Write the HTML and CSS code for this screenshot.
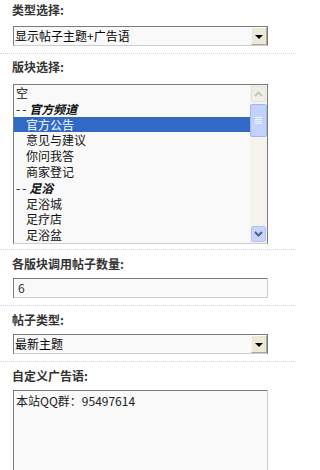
FILE: index.html
```html
<!DOCTYPE html>
<html lang="zh-CN">
<head>
<meta charset="utf-8">
<title>模块设置</title>
<link rel="stylesheet" href="styles.css">
</head>
<body>
<div class="form">
  <div class="sec sec-first">
    <div class="label">类型选择:</div>
    <div class="select">
      <span class="select-text">显示帖子主题+广告语</span>
      <span class="select-btn"><span class="arrow"></span></span>
    </div>
  </div>

  <div class="sec sec-list">
    <div class="label">版块选择:</div>
    <div class="listbox">
      <div class="options">
        <div class="opt">空</div>
        <div class="opt"><span class="dash">--</span><b class="grp">官方频道</b></div>
        <div class="opt sub selected">官方公告</div>
        <div class="opt sub">意见与建议</div>
        <div class="opt sub">你问我答</div>
        <div class="opt sub">商家登记</div>
        <div class="opt"><span class="dash">--</span><b class="grp">足浴</b></div>
        <div class="opt sub">足浴城</div>
        <div class="opt sub">足疗店</div>
        <div class="opt sub">足浴盆</div>
      </div>
      <div class="scrollbar">
        <div class="sb-btn sb-up">
          <svg width="9" height="6" viewBox="0 0 9 6"><path d="M1 5 L4.5 1.5 L8 5" fill="none" stroke="#c8c6bd" stroke-width="2"/></svg>
        </div>
        <div class="sb-track">
          <div class="sb-thumb">
            <svg width="7" height="7" viewBox="0 0 7 7"><path d="M0 .5H7M0 2.5H7M0 4.5H7M0 6.5H7" stroke="#eef3fe" stroke-width="1"/></svg>
          </div>
        </div>
        <div class="sb-btn sb-down">
          <svg width="9" height="6" viewBox="0 0 9 6"><path d="M1 1 L4.5 4.5 L8 1" fill="none" stroke="#4d6185" stroke-width="2"/></svg>
        </div>
      </div>
    </div>
  </div>

  <div class="sec">
    <div class="label">各版块调用帖子数量:</div>
    <div class="input">6</div>
  </div>

  <div class="sec">
    <div class="label">帖子类型:</div>
    <div class="select">
      <span class="select-text">最新主题</span>
      <span class="select-btn"><span class="arrow"></span></span>
    </div>
  </div>

  <div class="sec sec-last">
    <div class="label">自定义广告语:</div>
    <div class="textarea">本站QQ群：95497614</div>
  </div>
</div>
</body>
</html>
```

FILE: styles.css
```css
html, body {
  margin: 0;
  padding: 0;
  background: #ffffff;
}

body {
  font-family: "Noto Sans CJK SC", "DejaVu Sans", sans-serif;
  font-size: 12px;
  color: #000;
  overflow: hidden;
}

.form {
  width: 296px;
}

.sec {
  padding: 4px 0 7px 12px;
  border-bottom: 1px dotted #cfd6de;
}

.sec-first {
  padding-top: 0;
}

.sec-list {
  padding-top: 3px;
  padding-bottom: 5px;
}

.sec-last {
  border-bottom: none;
}

.label {
  font-weight: bold;
  line-height: 20px;
  height: 20px;
  color: #333;
  margin-bottom: 4px;
}

.sec-first .label {
  margin-bottom: 6px;
}

.sec-list .label {
  margin-bottom: 7px;
}

.select,
.input,
.textarea,
.listbox {
  margin-left: 1px;
  width: 255px;
  box-sizing: border-box;
  background: #f9f9f9;
  border-style: solid;
  border-width: 1px;
  border-color: #7b7b7b #cdcdcd #cdcdcd #7b7b7b;
}

.select {
  height: 20px;
  display: flex;
  align-items: stretch;
  border-right-color: #7b7b7b;
}

.select-text {
  flex: 1;
  line-height: 18px;
  padding-left: 1px;
  white-space: nowrap;
}

.select-btn {
  width: 16px;
  background: #ece9d8;
  border-style: solid;
  border-width: 1px;
  border-color: #ffffff #aca899 #aca899 #f5f4ee;
  box-sizing: border-box;
  display: flex;
  align-items: center;
  justify-content: center;
}

.arrow {
  width: 0;
  height: 0;
  border-left: 4px solid transparent;
  border-right: 4px solid transparent;
  border-top: 4px solid #000;
  margin-top: 1px;
}

.input {
  height: 20px;
  line-height: 18px;
  padding-left: 4px;
  color: #333;
}

.textarea {
  height: 90px;
  line-height: 18px;
  padding: 1px 2px;
  color: #222;
}

.listbox {
  height: 160px;
  display: flex;
  overflow: hidden;
  border-color: #7b7b7b #7b7b7b #cdcdcd #7b7b7b;
}

.options {
  flex: 1;
  overflow: hidden;
}

.opt {
  height: 15.8px;
  line-height: 15.8px;
  padding-left: 2px;
  white-space: nowrap;
  color: #111;
}

.opt.sub {
  padding-left: 12px;
}

.opt.selected {
  background: #316ac5;
  color: #fff;
}

.dash {
  letter-spacing: 2px;
  margin-right: 1px;
}

.grp {
  font-style: italic;
  font-weight: bold;
}

.scrollbar {
  width: 17px;
  display: flex;
  flex-direction: column;
  background: #f4f3ee;
}

.sb-btn {
  height: 16px;
  box-sizing: border-box;
  display: flex;
  align-items: center;
  justify-content: center;
  border-radius: 2px;
}

.sb-up {
  margin: 1px 1px 0 1px;
  background: #efeee8;
  border: 1px solid #e3e1d8;
}

.sb-down {
  margin: 0 1px 1px 1px;
  background: #c5d5fc;
  border: 1px solid #b0c4f4;
}

.sb-track {
  flex: 1;
  padding: 2px 0 0 0;
}

.sb-thumb {
  height: 33px;
  box-sizing: border-box;
  background: #c1d3fb;
  border: 1px solid #9fb8ef;
  border-radius: 2px;
  display: flex;
  align-items: center;
  justify-content: center;
}
```
